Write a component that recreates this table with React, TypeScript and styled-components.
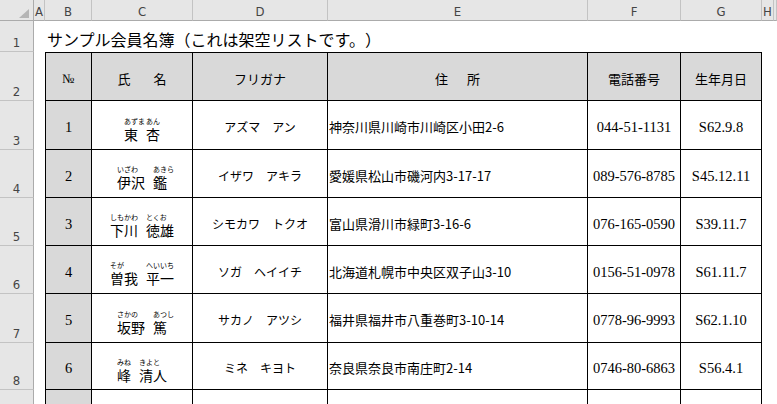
import React from "react";
import styled, { createGlobalStyle } from "styled-components";

const GlobalStyle = createGlobalStyle`
  html, body { margin: 0; padding: 0; background: #ffffff; overflow: hidden; }
  body {
    font-family: "Noto Sans CJK JP", sans-serif;
    color: #000;
    text-spacing-trim: space-all;
  }
  * { box-sizing: border-box; }
`;

const COLS = "34px 11px 47px 101px 135px 260px 93px 81px 12px 1fr";

const Sheet = styled.div`
  width: 777px;
  height: 404px;
  overflow: hidden;
  display: flex;
  flex-direction: column;
  background: #ffffff;
`;

const Row = styled.div<{ $h: number }>`
  display: grid;
  grid-template-columns: ${COLS};
  height: ${(p) => p.$h}px;
  flex: none;
`;

const Corner = styled.div`
  background: #e6e6e6;
  border-right: 1px solid #ababab;
  border-bottom: 1px solid #ababab;
  display: flex;
  align-items: flex-end;
  justify-content: flex-end;
  padding: 0 4px 2px 0;
`;

const ColHead = styled.div`
  background: #e6e6e6;
  border-right: 1px solid #c3c3c3;
  border-bottom: 1px solid #ababab;
  display: flex;
  align-items: center;
  justify-content: center;
  padding-top: 2px;
  font-family: "DejaVu Sans Condensed", "Liberation Sans", sans-serif;
  font-size: 13px;
  color: #444;
  overflow: hidden;
`;

const RowHead = styled.div`
  background: #e6e6e6;
  border-right: 1px solid #ababab;
  border-bottom: 1px solid #c3c3c3;
  display: flex;
  align-items: flex-end;
  justify-content: center;
  padding-bottom: 1px;
  font-family: "DejaVu Sans Condensed", "Liberation Sans", sans-serif;
  font-size: 13px;
  line-height: 15px;
  color: #444;
`;

const Blank = styled.div`
  background: #ffffff;
`;

const Title = styled.div`
  grid-column: 3 / -1;
  display: flex;
  align-items: flex-end;
  padding: 0 0 3px 2px;
  font-family: "Noto Sans CJK JP", sans-serif;
  font-size: 16px;
  line-height: 20px;
  white-space: nowrap;
  text-spacing-trim: space-all;
`;

const Cell = styled.div<{
  $fill?: boolean;
  $top?: boolean;
  $left?: boolean;
  $align?: "left" | "center";
}>`
  background: ${(p) => (p.$fill ? "#d9d9d9" : "#ffffff")};
  border-right: 1px solid #000;
  border-bottom: 1px solid #000;
  border-top: ${(p) => (p.$top ? "1px solid #000" : "none")};
  border-left: ${(p) => (p.$left ? "1px solid #000" : "none")};
  display: flex;
  align-items: center;
  justify-content: ${(p) => (p.$align === "left" ? "flex-start" : "center")};
  padding: 4px 0 0 ${(p) => (p.$align === "left" ? "1px" : "0")};
  white-space: nowrap;
  overflow: hidden;
`;

const HeadText = styled.span<{ $gap?: number }>`
  display: flex;
  gap: ${(p) => p.$gap ?? 0}px;
  font-family: "Noto Sans CJK JP", sans-serif;
  font-size: 13px;
  line-height: 16px;
`;

const NumText = styled.span<{ $size?: number }>`
  font-family: "Liberation Serif", "Noto Sans CJK JP", serif;
  font-size: ${(p) => p.$size ?? 14.5}px;
  line-height: 16px;
`;

const KanaText = styled.span`
  font-family: "Noto Sans CJK JP", sans-serif;
  font-size: 12px;
  line-height: 16px;
`;

const AddrText = styled.span`
  font-family: "Noto Sans CJK JP", sans-serif;
  font-size: 13px;
  line-height: 16px;
`;

const NameBlock = styled.div`
  display: flex;
  gap: 8px;
  align-items: flex-end;
  padding-top: 4px;
`;

const NamePart = styled.div`
  display: flex;
  flex-direction: column;
  align-items: flex-start;
`;

const Ruby = styled.span`
  font-family: "Noto Sans CJK JP", sans-serif;
  font-size: 7px;
  line-height: 9px;
  height: 9px;
  width: 0;
  white-space: nowrap;
  overflow: visible;
`;

const Base = styled.span`
  font-family: "Noto Sans CJK JP", sans-serif;
  font-size: 14px;
  line-height: 16px;
`;

type Member = {
  no: number;
  name: { base: string; ruby: string }[];
  kana: string;
  addr: string;
  tel: string;
  birth: string;
};

const members: Member[] = [
  {
    no: 1,
    name: [
      { base: "東", ruby: "あずま" },
      { base: "杏", ruby: "あん" },
    ],
    kana: "アズマ　アン",
    addr: "神奈川県川崎市川崎区小田2-6",
    tel: "044-51-1131",
    birth: "S62.9.8",
  },
  {
    no: 2,
    name: [
      { base: "伊沢", ruby: "いざわ" },
      { base: "鑑", ruby: "あきら" },
    ],
    kana: "イザワ　アキラ",
    addr: "愛媛県松山市磯河内3-17-17",
    tel: "089-576-8785",
    birth: "S45.12.11",
  },
  {
    no: 3,
    name: [
      { base: "下川", ruby: "しもかわ" },
      { base: "徳雄", ruby: "とくお" },
    ],
    kana: "シモカワ　トクオ",
    addr: "富山県滑川市緑町3-16-6",
    tel: "076-165-0590",
    birth: "S39.11.7",
  },
  {
    no: 4,
    name: [
      { base: "曽我", ruby: "そが" },
      { base: "平一", ruby: "へいいち" },
    ],
    kana: "ソガ　ヘイイチ",
    addr: "北海道札幌市中央区双子山3-10",
    tel: "0156-51-0978",
    birth: "S61.11.7",
  },
  {
    no: 5,
    name: [
      { base: "坂野", ruby: "さかの" },
      { base: "篤", ruby: "あつし" },
    ],
    kana: "サカノ　アツシ",
    addr: "福井県福井市八重巻町3-10-14",
    tel: "0778-96-9993",
    birth: "S62.1.10",
  },
  {
    no: 6,
    name: [
      { base: "峰", ruby: "みね" },
      { base: "清人", ruby: "きよと" },
    ],
    kana: "ミネ　キヨト",
    addr: "奈良県奈良市南庄町2-14",
    tel: "0746-80-6863",
    birth: "S56.4.1",
  },
];

const rowHeights = [49, 48, 48, 48, 49, 47];
const letters = ["A", "B", "C", "D", "E", "F", "G", "H", ""];

export default function App() {
  return (
    <>
      <GlobalStyle />
      <Sheet>
        <Row $h={21}>
          <Corner>
            <svg width="10" height="9" viewBox="0 0 10 9">
              <polygon points="10,0 10,9 0,9" fill="#b5b5b5" />
            </svg>
          </Corner>
          {letters.map((l, i) => (
            <ColHead key={i}>{l}</ColHead>
          ))}
        </Row>

        <Row $h={31}>
          <RowHead>1</RowHead>
          <Blank />
          <Title>サンプル会員名簿（これは架空リストです。）</Title>
        </Row>

        <Row $h={49}>
          <RowHead>2</RowHead>
          <Blank />
          <Cell $fill $top $left>
            <NumText $size={13}>№</NumText>
          </Cell>
          <Cell $fill $top>
            <HeadText $gap={23}>
              <span>氏</span>
              <span>名</span>
            </HeadText>
          </Cell>
          <Cell $fill $top>
            <HeadText>フリガナ</HeadText>
          </Cell>
          <Cell $fill $top>
            <HeadText $gap={19}>
              <span>住</span>
              <span>所</span>
            </HeadText>
          </Cell>
          <Cell $fill $top>
            <HeadText>電話番号</HeadText>
          </Cell>
          <Cell $fill $top>
            <HeadText>生年月日</HeadText>
          </Cell>
          <Blank />
          <Blank />
        </Row>

        {members.map((m, i) => (
          <Row key={m.no} $h={rowHeights[i]}>
            <RowHead>{i + 3}</RowHead>
            <Blank />
            <Cell $fill $left>
              <NumText>{m.no}</NumText>
            </Cell>
            <Cell>
              <NameBlock>
                {m.name.map((p) => (
                  <NamePart key={p.base}>
                    <Ruby>{p.ruby}</Ruby>
                    <Base>{p.base}</Base>
                  </NamePart>
                ))}
              </NameBlock>
            </Cell>
            <Cell>
              <KanaText>{m.kana}</KanaText>
            </Cell>
            <Cell $align="left">
              <AddrText>{m.addr}</AddrText>
            </Cell>
            <Cell>
              <NumText>{m.tel}</NumText>
            </Cell>
            <Cell>
              <NumText>{m.birth}</NumText>
            </Cell>
            <Blank />
            <Blank />
          </Row>
        ))}

        <Row $h={48}>
          <RowHead />
          <Blank />
          <Cell $fill $left />
          <Cell />
          <Cell />
          <Cell />
          <Cell />
          <Cell />
          <Blank />
          <Blank />
        </Row>
      </Sheet>
    </>
  );
}
